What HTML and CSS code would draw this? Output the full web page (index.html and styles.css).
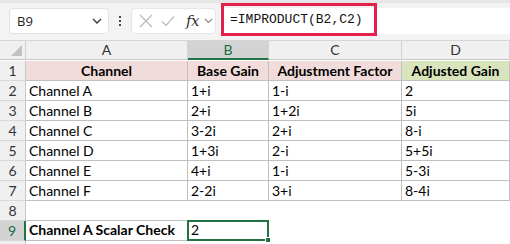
FILE: index.html
```html
<!DOCTYPE html>
<html>
<head>
<meta charset="utf-8">
<link rel="stylesheet" href="styles.css">
</head>
<body>
<div class="toolbar">
  <div class="namebox">
    <span class="nb-text">B9</span>
    <svg class="nb-chev" width="10" height="6" viewBox="0 0 10 6"><path d="M1 1 L5 5 L9 1" fill="none" stroke="#333" stroke-width="1.3"/></svg>
  </div>
  <div class="dots"><i></i><i></i><i></i></div>
  <div class="fxbox">
    <svg class="ic" width="14" height="14" viewBox="0 0 14 14"><path d="M1 1 L13 13 M13 1 L1 13" stroke="#b9b9b9" stroke-width="1.2" fill="none"/></svg>
    <svg class="ic" width="14" height="14" viewBox="0 0 14 14"><path d="M1 7.5 L5 11.5 L13 2.5" stroke="#b9b9b9" stroke-width="1.2" fill="none"/></svg>
    <span class="fx">fx</span>
    <svg class="fx-chev" width="9" height="6" viewBox="0 0 9 6"><path d="M1 1 L4.5 4.5 L8 1" fill="none" stroke="#8a8a8a" stroke-width="1.1"/></svg>
  </div>
  <div class="formula">
    <div class="formula-hl">=IMPRODUCT(B2,C2)</div>
  </div>
</div>
<div class="sheet">
  <div class="ch corner"><span class="tri"></span></div>
  <div class="ch">A</div>
  <div class="ch sel-col">B</div>
  <div class="ch">C</div>
  <div class="ch">D</div>

  <div class="rh">1</div>
  <div class="c t hd pink">Channel</div>
  <div class="c t hd pink">Base Gain</div>
  <div class="c t hd pink">Adjustment Factor</div>
  <div class="c t hd green">Adjusted Gain</div>

  <div class="rh">2</div>
  <div class="c t">Channel A</div>
  <div class="c t">1+i</div>
  <div class="c t">1-i</div>
  <div class="c t">2</div>

  <div class="rh">3</div>
  <div class="c t">Channel B</div>
  <div class="c t">2+i</div>
  <div class="c t">1+2i</div>
  <div class="c t">5i</div>

  <div class="rh">4</div>
  <div class="c t">Channel C</div>
  <div class="c t">3-2i</div>
  <div class="c t">2+i</div>
  <div class="c t">8-i</div>

  <div class="rh">5</div>
  <div class="c t">Channel D</div>
  <div class="c t">1+3i</div>
  <div class="c t">2-i</div>
  <div class="c t">5+5i</div>

  <div class="rh">6</div>
  <div class="c t">Channel E</div>
  <div class="c t">4+i</div>
  <div class="c t">1-i</div>
  <div class="c t">5-3i</div>

  <div class="rh">7</div>
  <div class="c t">Channel F</div>
  <div class="c t">2-2i</div>
  <div class="c t">3+i</div>
  <div class="c t">8-4i</div>

  <div class="rh">8</div>
  <div class="c"></div>
  <div class="c"></div>
  <div class="c"></div>
  <div class="c"></div>

  <div class="rh sel-row">9</div>
  <div class="c t9 b">Channel A Scalar Check</div>
  <div class="c t9 active">2<span class="selbox"><span class="handle"></span></span></div>
  <div class="c"></div>
  <div class="c"></div>

  <div class="rh"></div>
  <div class="c"></div>
  <div class="c"></div>
  <div class="c"></div>
  <div class="c"></div>
</div>
</body>
</html>
```
FILE: styles.css
```css
* { box-sizing: border-box; }
html, body { margin: 0; padding: 0; }
body {
  width: 510px;
  height: 244px;
  overflow: hidden;
  background: #fff;
  font-family: Lato, "Liberation Sans", sans-serif;
}
.toolbar {
  height: 40px;
  background: #f3f3f3;
  border-top: 3px solid #e6e6e6;
  display: flex;
  align-items: flex-start;
  padding-top: 5px;
  position: relative;
}
.namebox {
  margin-left: 9px;
  width: 100px;
  height: 26px;
  background: #fff;
  border: 1px solid #e3e3e3;
  border-radius: 4px;
  display: flex;
  align-items: center;
  justify-content: space-between;
  padding: 0 6px 0 7px;
}
.nb-text {
  font-family: "Open Sans", sans-serif;
  font-size: 13px;
  color: #222;
}
.dots {
  width: 22px;
  height: 26px;
  display: flex;
  flex-direction: column;
  align-items: center;
  justify-content: center;
  gap: 2px;
}
.dots i {
  display: block;
  width: 2px;
  height: 2px;
  background: #444;
}
.fxbox {
  width: 85px;
  height: 26px;
  background: #fff;
  border: 1px solid #e6e6e6;
  border-radius: 4px;
  display: flex;
  align-items: center;
  padding-left: 7px;
  gap: 8px;
}
.fx {
  font-family: "DejaVu Serif", "Liberation Serif", serif;
  font-style: italic;
  font-size: 15px;
  color: #333;
  margin-left: 3px;
  margin-right: -3px;
  letter-spacing: -0.5px;
}
.formula {
  margin-left: 4px;
  flex: 1;
  height: 26px;
  background: #fff;
  position: relative;
}
.formula-hl {
  position: absolute;
  left: 1px;
  top: -5px;
  width: 156px;
  height: 33px;
  border: 3px solid #e2214c;
  font-family: "Liberation Mono", monospace;
  font-size: 13px;
  color: #111;
  padding-left: 6px;
  line-height: 27px;
}
.sheet {
  display: grid;
  grid-template-columns: 26px 162px 81px 133px 108px;
  grid-template-rows: 20px repeat(9, 20px) 4px;
  border-top: 1px solid #d6d6d6;
}
.ch {
  background: #f0f0f0;
  border-right: 1px solid #d2d2d2;
  border-bottom: 1px solid #c6c6c6;
  font-size: 14px;
  color: #333;
  text-align: center;
  line-height: 18px;
  height: 19px;
}
.corner { position: relative; }
.tri {
  position: absolute;
  right: 3px;
  bottom: 3px;
  width: 0;
  height: 0;
  border-left: 11px solid transparent;
  border-bottom: 11px solid #c2c2c2;
}
.sel-col {
  background: #d3d3d3;
  border-bottom: 2px solid #217346;
  color: #1e6b40;
}
.rh {
  background: #f0f0f0;
  border-right: 1px solid #c6c6c6;
  border-bottom: 1px solid #d9d9d9;
  font-size: 14px;
  color: #333;
  text-align: center;
  line-height: 19px;
}
.sel-row {
  background: #d3d3d3;
  border-right: 2px solid #217346;
  color: #1e6b40;
}
.c {
  font-size: 14px;
  color: #000;
  padding-left: 3px;
  line-height: 20px;
  white-space: nowrap;
  overflow: visible;
}
.t {
  border-right: 1px solid #c0c0c0;
  border-bottom: 1px solid #c0c0c0;
  line-height: 19px;
}
.hd {
  font-weight: bold;
  text-align: center;
  padding-left: 0;
}
.pink { background: #f2dcdb; }
.green { background: #d8e4bc; }
.t9 {
  border-top: 1px solid #c0c0c0;
  border-right: 1px solid #c0c0c0;
  border-bottom: 1px solid #c0c0c0;
  line-height: 18px;
  margin-top: -1px;
  height: 21px;
}
.b { font-weight: bold; }
.active { position: relative; }
.selbox {
  position: absolute;
  left: -1px;
  top: -1px;
  right: -1px;
  bottom: -1px;
  border: 2px solid #217346;
}
.handle {
  position: absolute;
  right: -4px;
  bottom: -4px;
  width: 6px;
  height: 6px;
  background: #217346;
  border: 1px solid #fff;
}
```
